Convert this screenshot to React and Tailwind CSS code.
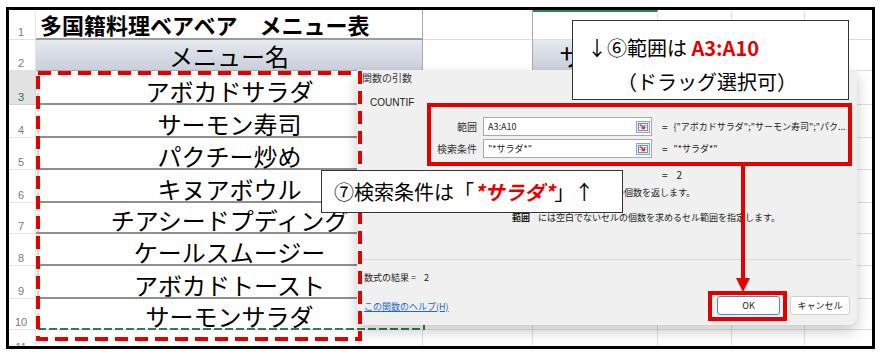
import { Fragment } from "react";

const MENU = [
    'アボカドサラダ',
    'サーモン寿司',
    'パクチー炒め',
    'キヌアボウル',
    'チアシードプディング',
    'ケールスムージー',
    'アボカドトースト',
    'サーモンサラダ',
];

const ROWS = [1, 2, 3, 4, 5, 6, 7, 8, 9, 10, 11];

export default function App() {
    return (
        <div className="relative w-[886px] h-[363px] bg-white overflow-hidden pl-[6px] pt-[7px] font-['Noto_Sans_CJK_JP',sans-serif] text-black">
            <Sheet/>
            <CopyMarquee/>
            <ArgsDialog/>
            <Annotations/>
        </div>
    );
}

function Sheet() {
    return (
        <div className="w-[869px] h-[342px] border-[3px] border-black overflow-hidden">
            <div className="grid grid-cols-[27px_387px_110px_125px_74px_73px_1fr] grid-rows-[30px_31px_34px_33px_32px_33px_31px_32px_33px_31px_25px]">
                {ROWS.map(r => (
                    <Fragment key={r}>
                        <div className={r === 3
                            ? "flex items-end justify-center pr-[2px] bg-[#e2e2e2] border-b border-r border-[#d2d2d2] font-['Liberation_Sans',sans-serif] text-[11px] leading-[14px] text-[#217346]"
                            : "flex items-end justify-center pr-[2px] border-b border-r border-[#e3e3e3] font-['Liberation_Sans',sans-serif] text-[11px] leading-[14px] text-[#7b7b7b]"}>
                            {r}
                        </div>
                        <CellA r={r}/>
                        <div className={r <= 2 ? "border-b border-r border-r-[#a8a8a8] border-b-[#dedede]" : "border-b border-r border-[#dedede]"}/>
                        <CellC r={r}/>
                        <div className="border-b border-r border-[#dedede]"/>
                        <div className="border-b border-r border-[#dedede]"/>
                        <div className="border-b border-[#dedede]"/>
                    </Fragment>
                ))}
            </div>
        </div>
    );
}

function CellA({ r }) {
    if (r === 1) {
        return (
            <div className="flex items-center pl-[4px] border-b-2 border-b-[#9a9a9a] border-r border-r-[#a8a8a8] text-[22px] leading-[26px] font-bold whitespace-nowrap">
                多国籍料理ベアベア　メニュー表
            </div>
        );
    }
    if (r === 2) {
        return (
            <div className="flex items-end justify-center pb-[3px] bg-gradient-to-b from-[#e5e9ef] to-[#c9d0db] border-b border-r border-[#a8a8a8] text-[24px] leading-[22px] whitespace-nowrap">
                メニュー名
            </div>
        );
    }
    if (r >= 3 && r <= 9) {
        return (
            <div className="flex items-end justify-center border-b-2 border-[#8f8f8f] text-[24px] leading-[24px] whitespace-nowrap">
                {MENU[r - 3]}
            </div>
        );
    }
    if (r === 10) {
        return (
            <div className="flex items-end justify-center pb-[1px] border-b border-[#dedede] text-[24px] leading-[24px] whitespace-nowrap">
                {MENU[7]}
            </div>
        );
    }
    return <div className="border-b border-r border-[#dedede]"/>;
}

function CellC({ r }) {
    if (r === 1) return <div className="border-t-2 border-t-[#2a8750] border-b border-r border-[#dedede]"/>;
    if (r === 2) {
        return (
            <div className="flex items-end justify-center pb-[3px] bg-gradient-to-b from-[#e5e9ef] to-[#c9d0db] border-b border-r border-[#a8a8a8] text-[24px] leading-[22px] whitespace-nowrap overflow-hidden">
                サイズ
            </div>
        );
    }
    return <div className="border-b border-r border-[#dedede]"/>;
}

// only the bottom edge and the stub at the right show from under the dialog
function CopyMarquee() {
    return (
        <svg className="absolute left-[37px] top-[70px]" width="390" height="262">
            <path d="M1 259H387V1" fill="none" stroke="#2f7d4c" strokeWidth="2" strokeDasharray="8 3"/>
            <path d="M1 1V259" fill="none" stroke="#9fb5a6" strokeWidth="1" strokeDasharray="8 3"/>
        </svg>
    );
}

function RefIcon() {
    return (
        <svg width="14" height="12" viewBox="0 0 14 12">
            <rect x="0.5" y="0.5" width="13" height="11" fill="#e6edf7" stroke="#8aa6cc"/>
            <rect x="2.5" y="2.5" width="9" height="7" fill="#fff" stroke="#6f8fbf"/>
            <path d="M3 4.5h8M3 6.5h8" stroke="#a9bfdf" strokeWidth="0.8"/>
            <path d="M4 3.5l4 3.5M8.5 4.5v3h-3" stroke="#e0302a" strokeWidth="1.4" fill="none"/>
        </svg>
    );
}

function ArgRow({ label, value, result }) {
    return (
        <div className="flex items-center h-[19px]">
            <div className="w-[120px] text-right text-[10px] leading-[12px] text-[#333]">{label}</div>
            <div className="ml-[6px] w-[169px] h-[19px] bg-white border border-[#a9a9a9] flex items-center pl-[4px] pr-[1px]">
                <span className="flex-1 text-[9px] leading-[12px] whitespace-nowrap">{value}</span>
                <RefIcon/>
            </div>
            <span className="ml-[10px] text-[10px] leading-[12px]">=</span>
            <span className="ml-[6px] text-[9px] leading-[12px] whitespace-nowrap">{result}</span>
        </div>
    );
}

function ArgsDialog() {
    return (
        <div className="absolute left-[357px] top-[70px] w-[500px] h-[255px] bg-[#f0f0f0] rounded-br-[8px] overflow-hidden shadow-[0_6px_14px_rgba(0,0,0,0.22)] text-[#1a1a1a] flex flex-col">
            <div className="pl-[5px] pt-[1px] text-[10px] leading-[14px] text-[#333]">関数の引数</div>
            <div className="ml-[13px] mt-[12px] font-['Liberation_Sans',sans-serif] text-[10px] leading-[12px]">COUNTIF</div>
            <div className="mt-[8px] flex flex-col gap-[3px]">
                <ArgRow label="範囲" value="A3:A10" result={'{"アボカドサラダ";"サーモン寿司";"パク...'}/>
                <ArgRow label="検索条件" value={'"*サラダ*"'} result={'"*サラダ*"'}/>
            </div>
            <div className="mt-[11px] pl-[305px] flex gap-[9px] text-[10px] leading-[12px]">
                <span>=</span><span>2</span>
            </div>
            <div className="mt-[6px] w-[338px] flex justify-end whitespace-nowrap text-[9px] leading-[12px]">
                指定された範囲に含まれるセルのうち、検索条件に一致するセルの個数を返します。
            </div>
            <div className="mt-[13px] pl-[155px] flex gap-[8px] whitespace-nowrap text-[9px] leading-[12px]">
                <b>範囲</b>
                <span>には空白でないセルの個数を求めるセル範囲を指定します。</span>
            </div>
            <div className="mt-[35px] mx-[5px] border-t border-[#d9d9d9]"/>
            <div className="mt-[12px] flex items-end pr-[7px]">
                <div className="pl-[7px] pb-[2px] flex flex-col text-[9px] leading-[12px]">
                    <div className="flex gap-[8px]"><span>数式の結果 =</span><span>2</span></div>
                    <a className="mt-[17px] text-[#2566c9] underline">この関数のヘルプ(H)</a>
                </div>
                <div className="ml-auto flex gap-[10px]">
                    <button className="w-[63px] h-[19px] bg-white border border-[#4f86d4] rounded-[3px] text-[9px] leading-[12px]">OK</button>
                    <button className="w-[60px] h-[19px] bg-white border border-[#cfcfcf] rounded-[3px] text-[9px] leading-[12px]">キャンセル</button>
                </div>
            </div>
        </div>
    );
}

function Annotations() {
    return (
        <>
            <svg className="absolute left-[36px] top-[71px]" width="326" height="270">
                <rect x="2" y="2" width="322" height="266" fill="none" stroke="#e50000" strokeWidth="4" strokeDasharray="13 7"/>
            </svg>

            <div className="absolute left-[427px] top-[103px] w-[425px] h-[63px] border-4 border-[#e50000]"/>

            <svg className="absolute left-[734px] top-[164px]" width="18" height="128">
                <line x1="9" y1="0" x2="9" y2="116" stroke="#e50000" strokeWidth="4"/>
                <polygon points="2,114 16,114 9,128" fill="#e50000"/>
            </svg>

            <div className="absolute left-[708px] top-[291px] w-[79px] h-[30px] border-4 border-[#e50000]"/>

            <div className="absolute left-[572px] top-[20px] w-[277px] h-[80px] bg-white border border-[#333] pt-[10px] text-[20px] leading-[34px] whitespace-nowrap">
                <div className="pl-[14px]">↓⑥範囲は <span className="font-bold text-[#e50000]">A3:A10</span></div>
                <div className="pl-[44px]">（ドラッグ選択可）</div>
            </div>

            <div className="absolute left-[321px] top-[170px] w-[302px] h-[43px] bg-white border border-[#333] pl-[12px] text-[20px] leading-[41px] whitespace-nowrap">
                ⑦検索条件は「<span className="font-bold italic text-[#e50000]">*サラダ*</span>」↑
            </div>
        </>
    );
}
